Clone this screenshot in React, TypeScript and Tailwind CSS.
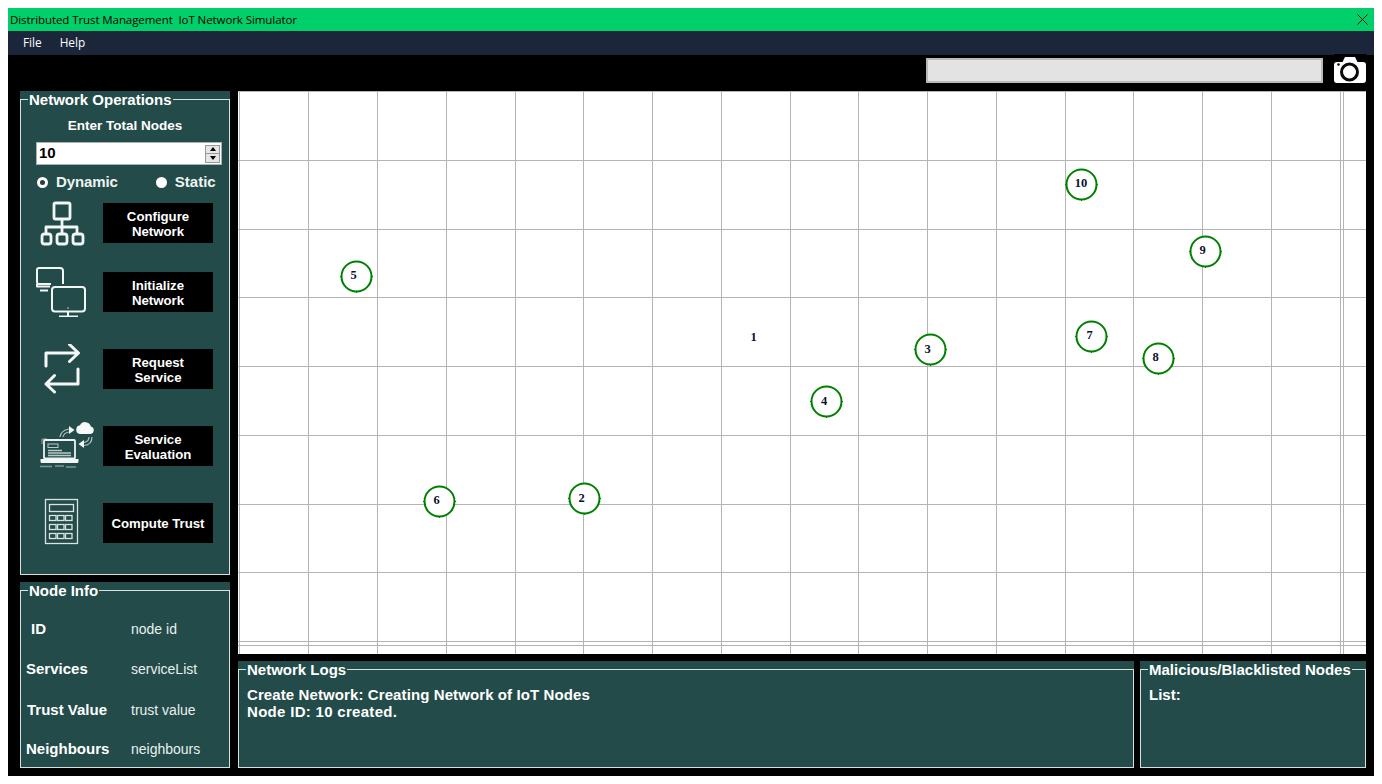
const panelFont = { fontFamily: '"Liberation Sans", Arial, sans-serif' };

const nodes = [
  { id: 5, cx: 356, cy: 276, tx: 353.5, ty: 275 },
  { id: 10, cx: 1081, cy: 184, tx: 1081, ty: 183 },
  { id: 9, cx: 1205, cy: 251, tx: 1202.5, ty: 250 },
  { id: 7, cx: 1091, cy: 336, tx: 1089.5, ty: 335 },
  { id: 8, cx: 1158, cy: 358, tx: 1155.5, ty: 357 },
  { id: 3, cx: 930, cy: 349, tx: 927.5, ty: 349 },
  { id: 4, cx: 826, cy: 401, tx: 824, ty: 401 },
  { id: 6, cx: 439, cy: 501, tx: 436.5, ty: 500 },
  { id: 2, cx: 584, cy: 498, tx: 581.5, ty: 498 },
];

const xLines = [239, 308, 377, 446, 515, 583, 652, 721, 790, 858, 927, 996, 1065, 1133, 1202, 1271, 1340, 1343];
const yLines = [91, 160, 229, 297, 366, 435, 504, 572, 641, 645];

function GroupBox({ title, className, children }: { title: string; className: string; children?: React.ReactNode }) {
  return (
    <div className={`bg-[#234b49] text-white ${className}`}>
      <fieldset className="h-full min-w-0 border border-[#d3e2de]">
        <legend className="ml-[7px] px-[1px] text-[15px] font-bold leading-[17px]">{title}</legend>
        {children}
      </fieldset>
    </div>
  );
}

function NetworkIcon() {
  return (
    <svg width="83" height="50" viewBox="20 198 83 50" fill="none" stroke="#f2f6f5" strokeWidth="2.800" strokeLinejoin="round">
      <rect x="53" y="203" width="16" height="16" rx="1.500" />
      <path d="M61 219v15M45 234v-7h31v7" />
      <rect x="41" y="234" width="9" height="10" rx="2.500" />
      <rect x="56" y="234" width="10" height="10" rx="2.500" />
      <rect x="72" y="234" width="10" height="10" rx="2.500" />
    </svg>
  );
}

function ComputersIcon() {
  return (
    <svg width="83" height="50" viewBox="20 267 83 50" fill="none" stroke="#f2f6f5" strokeWidth="2" strokeLinejoin="round">
      <path d="M50 284H38a2 2 0 0 1-2-2v-12a2 2 0 0 1 2-2h21a3 3 0 0 1 3 3v13" />
      <path d="M36 284v2.500h13M39 290.500h8" />
      <rect x="51" y="287" width="33" height="24.500" rx="3" />
      <path d="M67 311v5M58 316.500h19" />
      <circle cx="67" cy="308" r="0.700" fill="#f2f6f5" stroke="none" />
    </svg>
  );
}

function TransferIcon() {
  return (
    <svg width="83" height="50" viewBox="20 344 83 50" fill="none" stroke="#f5f8f7" strokeWidth="3" strokeLinecap="round" strokeLinejoin="round">
      <path d="M45 366v-13h32M68.500 344.500 77.500 353l-9 8.500" />
      <path d="M77 369v15H45M53.500 375.500 45 384l8.500 8" />
    </svg>
  );
}

function CloudLaptopIcon() {
  return (
    <svg width="83" height="50" viewBox="20 421 83 50" fill="none">
      <path d="M41 444v-5h5" stroke="#8fa7a4" strokeWidth="1" />
      <rect x="43" y="440" width="31" height="18.500" rx="1" stroke="#eef3f2" strokeWidth="1.800" />
      <rect x="47" y="444" width="10" height="3.500" stroke="#b7c9c6" strokeWidth="1" />
      <path d="M47 450.500h14M47 453h23M47 455.500h23" stroke="#b7c9c6" strokeWidth="1.300" />
      <path d="M39.500 459h38v2.500a1.500 1.500 0 0 1-1.500 1.500H41a1.500 1.500 0 0 1-1.500-1.500z" fill="#f2f6f5" />
      <path d="M39 466.500h12M54 466h9M65 467h10" stroke="#7d9794" strokeWidth="1.300" />
      <path d="M79 434h10a3.800 3.800 0 0 0 .8-7.500 5.800 5.800 0 0 0-10.800-1.200A4.400 4.400 0 0 0 79 434z" fill="#f7faf9" />
      <path d="M59 437c.5-4 3.500-7 9-8M62 437c.5-2.500 2.500-4.500 6-5" stroke="#aebfbd" strokeWidth="1.200" />
      <path d="M68 426l5.500 4-5.500 4z" fill="#f2f6f5" />
      <path d="M91 437c0 5-3 8-8 8.500M88 437c0 3-2 5-5 5.500" stroke="#aebfbd" strokeWidth="1.200" />
      <path d="M83 440l-5.500 4 5.500 4z" fill="#f2f6f5" />
    </svg>
  );
}

function CalculatorIcon() {
  const keys = [515, 524, 533].flatMap((y) => [48, 56, 64].map((x) => ({ x, y })));
  return (
    <svg width="83" height="50" viewBox="20 498 83 50" fill="none" stroke="#d9e4e2" strokeWidth="1.300">
      <rect x="44.500" y="499.500" width="32" height="44" />
      <rect x="48.500" y="504.500" width="24" height="7" />
      {keys.map((k) => (
        <rect key={`${k.x}-${k.y}`} x={k.x + 0.5} y={k.y + 0.5} width="6.500" height="5" />
      ))}
    </svg>
  );
}

function ActionRow({ icon, label, className }: { icon: React.ReactNode; label: React.ReactNode; className: string }) {
  return (
    <div className={`flex h-[40px] items-center ${className}`}>
      <div className="w-[82px] shrink-0">{icon}</div>
      <button className="h-[40px] w-[110px] bg-black text-center text-[13.2px] font-bold leading-[15px] text-white">{label}</button>
    </div>
  );
}

function TwoLines({ top, bottom }: { top: string; bottom: string }) {
  return (
    <span className="block pt-[2px]">
      {top}
      <br />
      {bottom}
    </span>
  );
}

function InfoRow({ label, value, className, pad }: { label: string; value: string; className: string; pad: string }) {
  return (
    <div className={`flex h-[20px] items-center ${className}`}>
      <span className={`w-[110px] text-[15px] font-bold ${pad}`}>{label}</span>
      <span className="text-[14px] text-[#e8f0ee]">{value}</span>
    </div>
  );
}

function Graph() {
  return (
    <div className="relative h-[563px] overflow-hidden bg-white">
      <svg className="absolute inset-0" width="1128" height="563" viewBox="238 91 1128 563">
        {xLines.map((x) => (
          <line key={x} x1={x + 0.5} x2={x + 0.5} y1="91" y2="654" stroke="#b4b4b4" />
        ))}
        {yLines.map((y) => (
          <line key={y} x1="238" x2="1366" y1={y + 0.5} y2={y + 0.5} stroke="#b4b4b4" />
        ))}
        {nodes.map((n) => (
          <g key={n.id} stroke="#008000" transform="translate(0.5 0.5)">
            <circle cx={n.cx} cy={n.cy} r="15" fill="#fff" strokeWidth="2" />
            <path d={`M${n.cx - 16.5} ${n.cy}h1.500M${n.cx + 15} ${n.cy}h1.500M${n.cx} ${n.cy + 15}v1.500`} strokeWidth="1" />
          </g>
        ))}
      </svg>
      {nodes.map((n) => (
        <span
          key={n.id}
          className="absolute -translate-x-1/2 -translate-y-1/2 font-['Liberation_Serif'] text-[12.5px] font-bold leading-none text-[#0b1030]"
          style={{ left: n.tx - 238, top: n.ty - 91 }}
        >
          {n.id}
        </span>
      ))}
      <span
        className="absolute -translate-x-1/2 -translate-y-1/2 font-['Liberation_Serif'] text-[12.5px] font-bold leading-none text-[#0b1030]"
        style={{ left: 753.5 - 238, top: 337 - 91 }}
      >
        1
      </span>
    </div>
  );
}

export default function App() {
  return (
    <div className="h-[784px] w-[1382px] overflow-hidden bg-white p-2" style={panelFont}>
      <div className="flex h-full flex-col">
        <div className="flex h-[23px] shrink-0 items-center justify-between bg-[#00cf6a] pl-[2px] pr-[6px] font-['Open_Sans'] text-[11.5px] tracking-[-0.08px] text-black">
          <span className="whitespace-pre">Distributed Trust Management  IoT Network Simulator</span>
          <svg width="11" height="11" viewBox="0 0 11 11" stroke="#111" strokeWidth="1">
            <path d="M.5.5l10 10M10.500.5l-10 10" />
          </svg>
        </div>
        <div className="flex h-[24px] shrink-0 items-center gap-[18px] bg-[#1b263b] pl-[15px] font-['Open_Sans'] text-[11.8px] text-white">
          <span>File</span>
          <span>Help</span>
        </div>

        <div className="flex flex-1 flex-col bg-black pb-2 pl-3 pr-2">
          <div className="flex h-[36px] shrink-0 items-start justify-end">
            <div className="mr-[11px] mt-[3px] h-[25px] w-[397px] border-2 border-[#b9b9b9] bg-[#e3e3e3]" />
            <svg width="32" height="30" viewBox="0 -1 32 30" className="-mt-[1px] bg-black">
              <path d="M3 7h5.500l2.500-5h10l2.500 5H29a3 3 0 0 1 3 3v15a3 3 0 0 1-3 3H3a3 3 0 0 1-3-3V10a3 3 0 0 1 3-3z" fill="#fff" />
              <circle cx="15.500" cy="17" r="8" fill="none" stroke="#0a0a0a" strokeWidth="3" />
              <circle cx="4.500" cy="9.500" r="1.300" fill="#0a0a0a" />
            </svg>
          </div>

          <div className="flex min-h-0 flex-1">
            <div className="flex w-[210px] shrink-0 flex-col gap-[7px]">
              <GroupBox title="Network Operations" className="h-[484px] shrink-0">
                <div className="flex flex-col pl-[15px]">
                  <div className="mt-[10px] w-[178px] text-center text-[13.5px] font-bold leading-[16px]">Enter Total Nodes</div>
                  <div className="mt-[8px] flex h-[23px] w-[186px] items-center justify-between border border-[#a9b4b2] bg-white pl-[2px] pr-[1px] text-[15px] font-bold text-black">
                    <span>10</span>
                    <div className="flex h-[18px] w-[15px] flex-col border border-[#999] bg-[#e6e6e6]">
                      <span className="flex flex-1 items-center justify-center border-b border-[#999]">
                        <span className="h-0 w-0 border-x-[3px] border-b-[4px] border-x-transparent border-b-black" />
                      </span>
                      <span className="flex flex-1 items-center justify-center">
                        <span className="h-0 w-0 border-x-[3px] border-t-[4px] border-x-transparent border-t-black" />
                      </span>
                    </div>
                  </div>
                  <div className="mt-[8px] flex h-[18px] items-center text-[15px] font-bold text-[#eef4f2]">
                    <span className="ml-[1px] h-[11px] w-[11px] rounded-full border-[3px] border-white bg-[#2d3a38]" />
                    <span className="ml-[8px] tracking-[-0.1px]">Dynamic</span>
                    <span className="ml-[38px] h-[11px] w-[11px] rounded-full bg-white" />
                    <span className="ml-[8px]">Static</span>
                  </div>
                </div>
                <div className="flex flex-col">
                  <ActionRow className="mt-[12px]" icon={<NetworkIcon />} label={<TwoLines top="Configure" bottom="Network" />} />
                  <ActionRow className="mt-[29px]" icon={<ComputersIcon />} label={<TwoLines top="Initialize" bottom="Network" />} />
                  <ActionRow className="mt-[37px]" icon={<TransferIcon />} label={<TwoLines top="Request" bottom="Service" />} />
                  <ActionRow className="mt-[37px]" icon={<CloudLaptopIcon />} label={<TwoLines top="Service" bottom="Evaluation" />} />
                  <ActionRow className="mt-[37px]" icon={<CalculatorIcon />} label="Compute Trust" />
                </div>
              </GroupBox>

              <GroupBox title="Node Info" className="min-h-0 flex-1">
                <InfoRow className="mt-[20px]" pad="pl-[10px]" label="ID" value="node id" />
                <InfoRow className="mt-[20px]" pad="pl-[5px]" label="Services" value="serviceList" />
                <InfoRow className="mt-[21px]" pad="pl-[6px]" label="Trust Value" value="trust value" />
                <InfoRow className="mt-[19px]" pad="pl-[5px]" label="Neighbours" value="neighbours" />
              </GroupBox>
            </div>

            <div className="ml-[8px] flex min-w-0 flex-1 flex-col gap-[7px]">
              <Graph />
              <div className="flex min-h-0 flex-1 gap-[6px]">
                <GroupBox title="Network Logs" className="min-w-0 flex-1">
                  <div className="pl-[8px] pt-[8px] text-[15px] font-bold leading-[17px]">
                    <div className="tracking-[0.1px]">Create Network: Creating Network of IoT Nodes</div>
                    <div className="tracking-[0.3px]">Node ID: 10 created.</div>
                  </div>
                </GroupBox>
                <GroupBox title="Malicious/Blacklisted Nodes" className="w-[226px] shrink-0">
                  <div className="pl-[8px] pt-[8px] text-[15px] font-bold leading-[17px]">List:</div>
                </GroupBox>
              </div>
            </div>
          </div>
        </div>
      </div>
    </div>
  );
}
